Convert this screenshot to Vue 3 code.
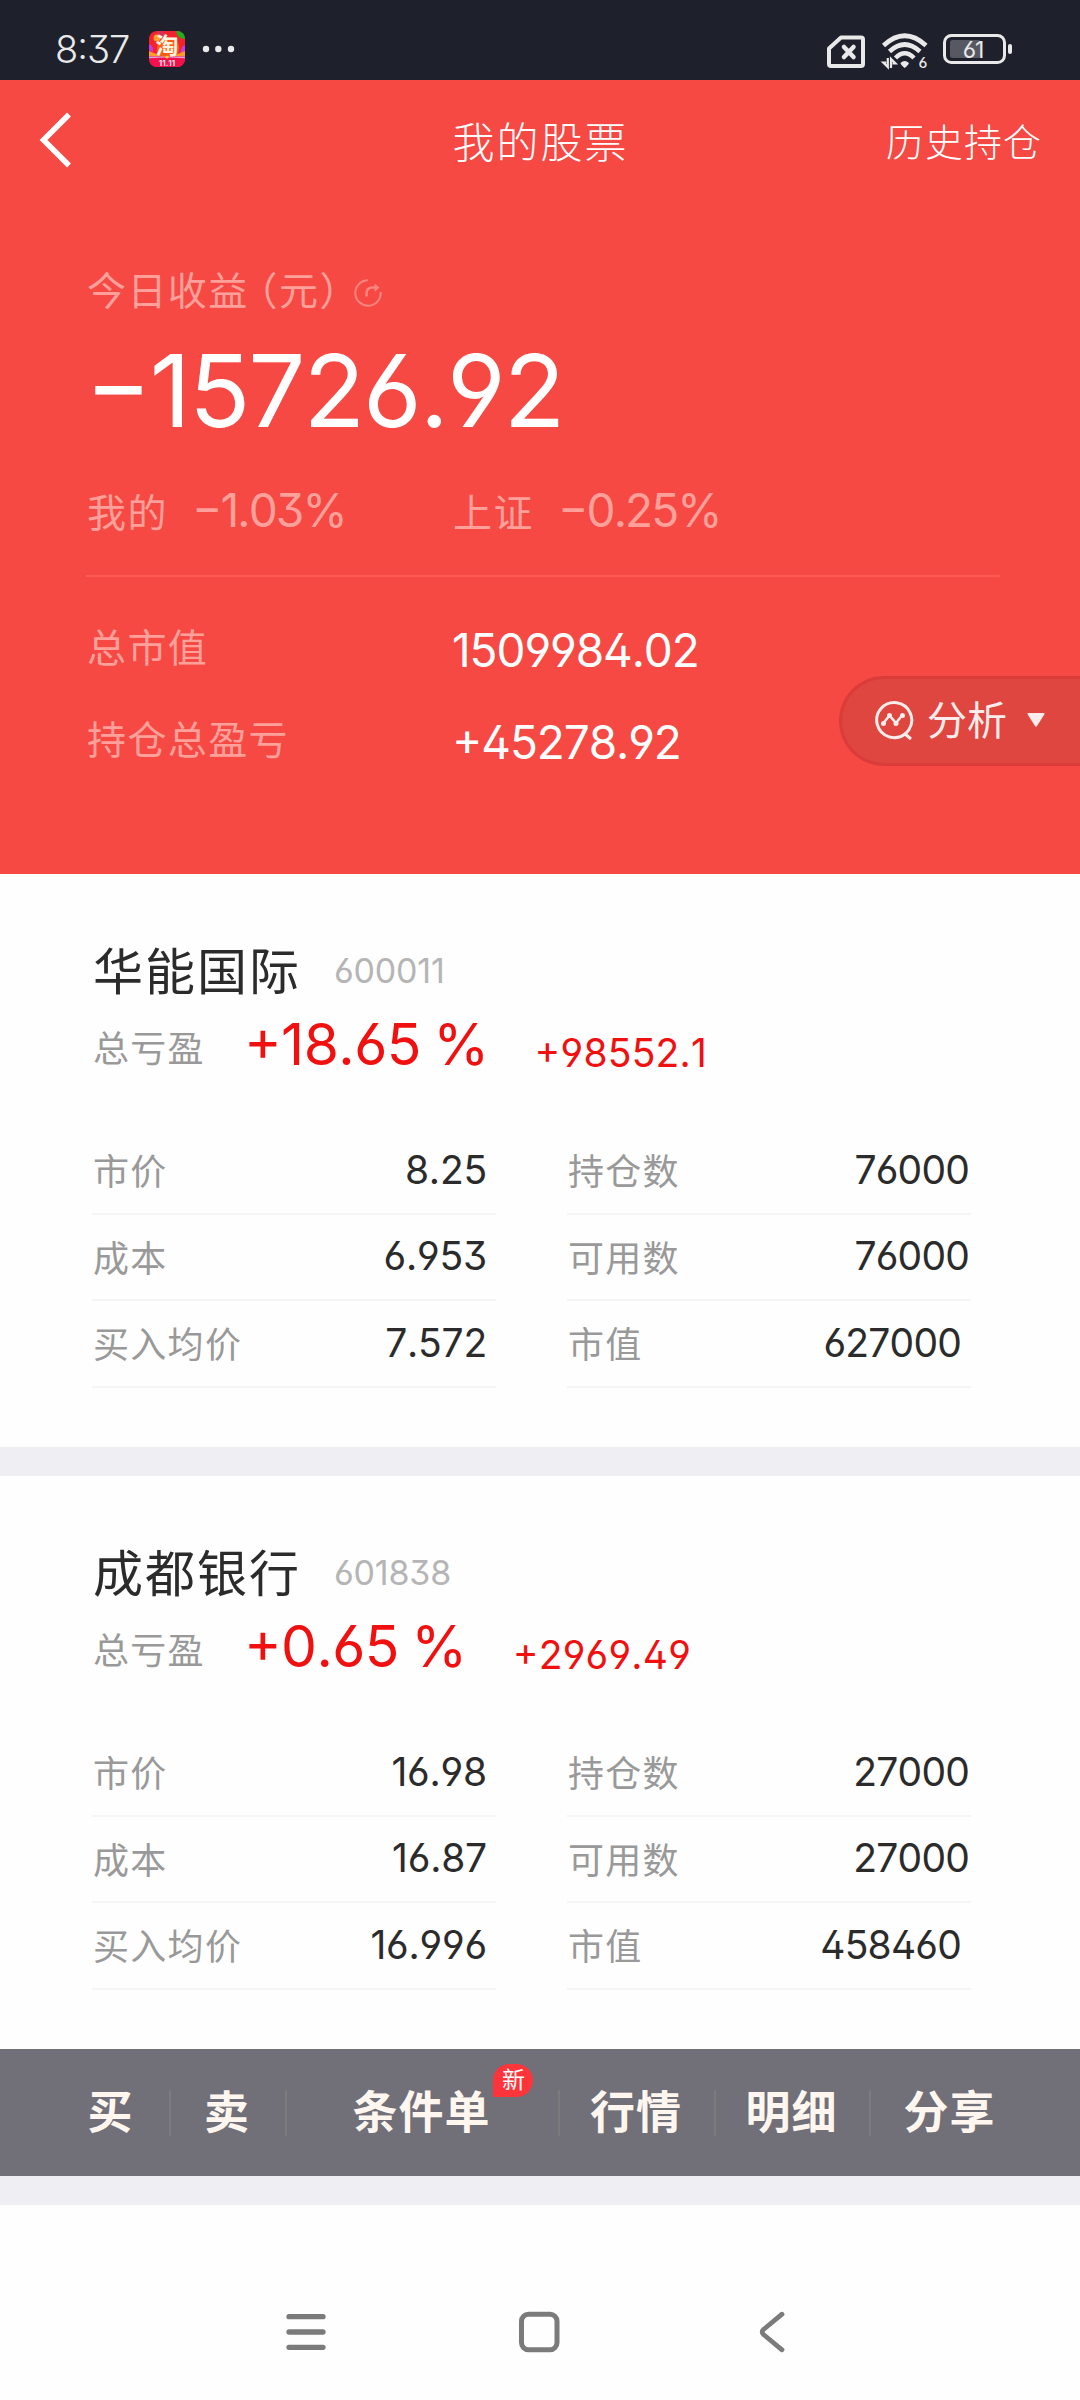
<template>
  <div class="stock-page">
    <div class="status-bar">
      <span class="time">8:37</span>
      <svg class="app-icon" width="36" height="36" viewBox="0 0 36 36">
        <defs>
          <clipPath id="appClip"><rect width="36" height="36" rx="8" /></clipPath>
        </defs>
        <g clip-path="url(#appClip)">
          <rect width="36" height="36" fill="#f5222d" />
          <path d="M8 0h8l-2 8-8 2z" fill="#d9304f" />
          <circle cx="19" cy="17" r="11" fill="#ff5a14" />
          <path d="M0 13q5 2 4 8l-4-2zM36 14q-5 2-4 9l4-3z" fill="#c83be0" />
          <path d="M27 0h9v8q-7 0-9-8z" fill="#19b51c" />
          <circle cx="8" cy="7" r="3.5" fill="#ffa12b" />
          <path d="M0 20l12 5H0zM36 20l-12 5h12z" fill="#ff9a2a" />
          <path d="M0 25.5h36v2H0z" fill="#d9a3e6" />
          <path d="M0 27.5q18-2 36 0V36H0z" fill="#f2114c" />
          <circle cx="18" cy="26" r="1.5" fill="#ffd21f" />
        </g>
        <text x="18" y="23" text-anchor="middle" class="app-char">淘</text>
        <text x="18" y="34.500" text-anchor="middle" class="app-date">11.11</text>
      </svg>
      <svg class="dots" width="34" height="8" viewBox="0 0 34 8">
        <circle cx="4" cy="4" r="3.2" />
        <circle cx="16.3" cy="4" r="3.2" />
        <circle cx="29" cy="4" r="3.2" />
      </svg>

      <svg class="status-icons" width="190" height="50" viewBox="0 -6 190 50">
        <!-- no sim -->
        <path d="M16 7.500H36q2 0 2 2V34q0 2-2 2H6q-2 0-2-2V18.500z" fill="none" stroke="#e9e9e9" stroke-width="4" stroke-linejoin="round" />
        <path d="M19 17l9.500 10M28.500 17L19 27" stroke="#e9e9e9" stroke-width="4.500" stroke-linecap="round" />
        <!-- wifi -->
        <g fill="none" stroke="#e9e9e9" stroke-width="4.600">
          <path d="M58.500 15.500Q79.700-4 101 15.500" />
          <path d="M64.500 21.500Q79.700 7.500 95 21.500" />
          <path d="M70.500 28Q79.700 18.500 89 28" />
        </g>
        <path d="M75.500 33q4.200-4 8.400 0q0 1.500-4.200 5q-4.200-3.500-4.200-5z" fill="#e9e9e9" />
        <path d="M62.800 28v9l-4.500-4.500h3M66 38v-9l4.500 4.500h-3" fill="none" stroke="#e9e9e9" stroke-width="2.200" />
        <text x="93.500" y="38" class="wifi-num">6</text>
        <!-- battery -->
        <rect x="119.500" y="5.500" width="60" height="27" rx="7" fill="none" stroke="#e9e9e9" stroke-width="3" />
        <rect x="125" y="10" width="30.500" height="18" rx="2.500" fill="#565862" />
        <rect x="183" y="14" width="4" height="10" rx="2" fill="#e9e9e9" />
        <text x="148" y="27.500" text-anchor="middle" class="battery-num">61</text>
      </svg>
    </div>

    <div class="header">
      <div class="nav">
        <svg class="back" width="40" height="60" viewBox="0 0 40 60">
          <path d="M33 4.500L7.500 30L33 55.500" fill="none" stroke="#fff" stroke-width="5.500" />
        </svg>
        <span class="title">我的股票</span>
        <span class="history">历史持仓</span>
      </div>

      <div class="summary">
        <div class="today">
          <span>今日收益</span><span class="unit">（元）</span>
          <svg width="30" height="30" viewBox="0 0 30 30">
            <g fill="none" stroke="#fd8580" stroke-width="2">
              <path d="M15 2.300A12.700 12.700 0 1 0 27.700 14" />
              <path d="M13.500 18.500v-3q0-6 6-6h5" stroke-width="2.500" />
            </g>
            <path d="M21.500 5.500l5 4l-5 4.500z" fill="#fd8580" />
          </svg>
        </div>
        <div class="profit">−15726.92</div>
        <div class="rates">
          <div v-for="rate in rates" :key="rate.name" class="rate">
            <span class="rate-name">{{ rate.name }}</span>
            <span class="rate-value">{{ rate.value }}</span>
          </div>
        </div>
        <div v-for="item in totals" :key="item.label" class="total">
          <span class="total-label">{{ item.label }}</span>
          <span class="total-value">{{ item.value }}</span>
        </div>
      </div>

      <div class="analysis">
        <svg width="40" height="42" viewBox="0 0 40 42">
          <g fill="none" stroke="#fdeceb" stroke-width="3">
            <path d="M31.500 34.500A17.500 17.500 0 1 1 35 30.500Q33.500 33 31 35L37 40" />
            <path d="M9.500 24l6-7.500l6.500 7.500l6-7.500" stroke-width="2.500" />
          </g>
          <g fill="#fdeceb">
            <circle cx="9.500" cy="24.500" r="2.500" />
            <circle cx="15.500" cy="16.500" r="2.500" />
            <circle cx="22" cy="24.500" r="2.500" />
            <circle cx="28.500" cy="16.500" r="2.500" />
          </g>
        </svg>
        <span class="analysis-text">分析</span>
        <svg width="18" height="14" viewBox="0 0 18 14">
          <path d="M1.500 0h15q1.500 0 .8 1.500L10 13q-1 1.500-2 0L.7 1.500Q0 0 1.500 0z" fill="#fdeceb" />
        </svg>
      </div>
    </div>

    <div v-for="stock in stocks" :key="stock.code" class="stock">
      <div class="stock-head">
        <span class="stock-name">{{ stock.name }}</span>
        <span class="stock-code">{{ stock.code }}</span>
      </div>
      <div class="stock-profit">
        <span class="label">总亏盈</span>
        <span class="percent">{{ stock.percent }}</span>
        <span class="amount">{{ stock.amount }}</span>
      </div>
      <div class="stock-grid">
        <div v-for="cell in stock.cells" :key="cell.label" class="cell">
          <span class="label">{{ cell.label }}</span>
          <span class="value" :class="{ inset: cell.label === '市值' }">{{ cell.value }}</span>
        </div>
      </div>
    </div>

    <div class="actions">
      <div v-for="action in actions" :key="action.name" class="action" :style="{ width: action.width + 'px' }">
        <span class="action-name">{{ action.name }}<i v-if="action.badge" class="badge">{{ action.badge }}</i></span>
      </div>
    </div>
    <div class="divider"></div>

    <div class="system-nav">
      <svg width="40" height="44" viewBox="0 0 40 44">
        <path d="M3 6.700h34M3 22h34M3 37.300h34" stroke-width="5.300" />
      </svg>
      <svg width="44" height="44" viewBox="0 0 44 44">
        <rect x="4.500" y="4.200" width="35.500" height="35.500" rx="7" stroke-width="5" />
      </svg>
      <svg width="30" height="44" viewBox="0 0 30 44">
        <path d="M25 4.200L6.500 19.500q-2.600 2.500 0 5L25 39.800" stroke-width="4.800" />
      </svg>
    </div>
  </div>
</template>

<script setup>
import { ref } from 'vue'

const rates = ref([
  { name: '我的', value: '−1.03%' },
  { name: '上证', value: '−0.25%' }
])

const totals = ref([
  { label: '总市值', value: '1509984.02' },
  { label: '持仓总盈亏', value: '+45278.92' }
])

const stocks = ref([
  {
    name: '华能国际',
    code: '600011',
    percent: '+18.65 %',
    amount: '+98552.1',
    cells: [
      { label: '市价', value: '8.25' },
      { label: '持仓数', value: '76000' },
      { label: '成本', value: '6.953' },
      { label: '可用数', value: '76000' },
      { label: '买入均价', value: '7.572' },
      { label: '市值', value: '627000' }
    ]
  },
  {
    name: '成都银行',
    code: '601838',
    percent: '+0.65 %',
    amount: '+2969.49',
    cells: [
      { label: '市价', value: '16.98' },
      { label: '持仓数', value: '27000' },
      { label: '成本', value: '16.87' },
      { label: '可用数', value: '27000' },
      { label: '买入均价', value: '16.996' },
      { label: '市值', value: '458460' }
    ]
  }
])

const actions = ref([
  { name: '买', width: 122 },
  { name: '卖', width: 116 },
  { name: '条件单', width: 273, badge: '新' },
  { name: '行情', width: 156 },
  { name: '明细', width: 155 },
  { name: '分享', width: 159 }
])
</script>

<style>
body {
  background: #fefefe;
}
</style>

<style scoped>
.stock-page {
  width: 1080px;
  height: 2400px;
  overflow: hidden;
  background: #fefefe;
  font-family: Inter, "Noto Sans CJK SC", sans-serif;
  font-feature-settings: "ss01", "case";
  font-kerning: none;
  white-space: nowrap;
}

.status-bar {
  display: flex;
  align-items: center;
  height: 80px;
  padding: 18px 65px 0 55px;
  box-sizing: border-box;
  background: #1e212b;
}

.time {
  width: 94px;
  font-size: 38px;
  font-weight: 350;
  line-height: 60px;
  letter-spacing: -1px;
  color: #e9e9e9;
}

.app-char {
  font-size: 23px;
  font-weight: 700;
  fill: #fff5e0;
}

.app-date {
  font-size: 8px;
  font-weight: 700;
  fill: #ffe3ee;
}

.dots {
  margin-left: 17px;
  fill: #e9e9e9;
}

.status-icons {
  margin-left: auto;
}

.wifi-num {
  font-size: 15px;
  font-weight: 500;
  fill: #e9e9e9;
}

.battery-num {
  font-size: 23px;
  letter-spacing: -1px;
  fill: #e9e9e9;
}

.header {
  position: relative;
  height: 794px;
  background: #f64943;
  color: #fff;
}

.nav {
  display: grid;
  grid-template-columns: 1fr auto 1fr;
  align-items: center;
  height: 120px;
  padding: 0 38px 0 36px;
}

.title {
  padding: 0 0 2px 3px;
  font-size: 42px;
  font-weight: 300;
  letter-spacing: 2px;
}

.history {
  justify-self: end;
  padding-bottom: 2px;
  font-size: 38px;
  font-weight: 300;
  letter-spacing: 1px;
}

.summary {
  padding: 61px 80px 0 86px;
  line-height: 60px;
}

.today {
  display: flex;
  align-items: center;
  padding-left: 1px;
  font-size: 39px;
  letter-spacing: 1.4px;
  color: #ffa09b;
}

.unit {
  margin-left: -10px;
}

.today svg {
  margin: 4px 0 0 -7px;
}

.profit {
  margin: 9px 0 0 -1px;
  font-size: 101px;
  line-height: 120px;
  letter-spacing: -2px;
}

.rates {
  display: flex;
  margin-top: 32px;
  padding-bottom: 33px;
  border-bottom: 2px solid #fb5b54;
  margin-bottom: 42px;
  color: #ffa09b;
}

.rate {
  display: flex;
  width: 366px;
}

.rate-name {
  width: 105px;
  padding: 1px 0 0 1px;
  line-height: 60px;
  height: 59px;
  font-size: 39px;
  letter-spacing: 1.4px;
}

.rate-value {
  height: 60px;
  font-size: 46px;
  line-height: 57px;
  letter-spacing: -1.9px;
}

.total {
  display: flex;
  height: 60px;
  margin-bottom: 32px;
}

.total-label {
  width: 365px;
  padding-left: 1px;
  font-size: 39px;
  line-height: 57px;
  letter-spacing: 1.4px;
  color: #ffa09b;
}

.total-value {
  font-size: 46px;
  line-height: 63px;
  letter-spacing: -1.1px;
}

.analysis {
  position: absolute;
  top: 596px;
  right: 0;
  display: flex;
  align-items: center;
  width: 241px;
  height: 90px;
  padding: 0 0 2px 32px;
  box-sizing: border-box;
  border: 3px solid #da3c3a;
  border-right: none;
  border-radius: 45px 0 0 45px;
  background: #de463f;
}

.analysis-text {
  width: 100px;
  margin-left: 13px;
  padding-bottom: 5px;
  font-size: 40px;
  color: #fdeceb;
}

.stock {
  height: 573px;
  padding: 60px 109px 0 92px;
  box-sizing: border-box;
}

.stock + .stock {
  height: 602px;
  border-top: 29px solid #efeef3;
}

.stock-head {
  display: flex;
  align-items: center;
  height: 72px;
  padding-left: 1px;
}

.stock-name {
  width: 241px;
  padding-bottom: 5px;
  font-size: 50px;
  letter-spacing: 2px;
  color: #2b2b2b;
}

.stock-code {
  font-size: 34px;
  letter-spacing: -0.2px;
  color: #b5b5b5;
}

.stock-profit {
  display: flex;
  height: 80px;
  padding-left: 1px;
  line-height: 78px;
  color: #f0100f;
}

.label {
  font-size: 36px;
  letter-spacing: 1.3px;
  color: #999;
}

.stock-profit .label {
  width: 151px;
  line-height: 86px;
}

.percent {
  font-size: 57px;
  letter-spacing: -0.6px;
  word-spacing: -3px;
}

.amount {
  margin-left: 46px;
  font-size: 39px;
  line-height: 93px;
  letter-spacing: 0.2px;
}

.stock-grid {
  display: grid;
  grid-template-columns: 404px 404px;
  grid-template-rows: 87px 86px 87px;
  column-gap: 71px;
  margin-top: 42px;
}

.cell {
  display: flex;
  align-items: center;
  justify-content: space-between;
  padding: 0 2px 3px 1px;
  border-bottom: 2px solid #f5f5f5;
}

.cell:nth-child(odd) {
  padding-right: 9px;
}

.value {
  font-size: 39px;
  letter-spacing: -0.8px;
  color: #2b2b2b;
}

.cell:nth-child(odd) .value {
  letter-spacing: -0.2px;
}

.inset {
  padding-right: 8px;
}

.actions {
  display: flex;
  align-items: center;
  height: 127px;
  padding-left: 49px;
  background: #716f78;
}

.action {
  height: 46px;
  box-sizing: border-box;
  border-right: 2px solid #7d7a7c;
  font-size: 45px;
  font-weight: 600;
  line-height: 46px;
  letter-spacing: 1px;
  text-align: center;
  color: #fff7ef;
}

.action:first-child {
  padding-left: 3px;
}

.action:nth-child(n + 2) {
  padding-right: 2px;
}

.action:last-child {
  border-right: none;
}

.action-name {
  position: relative;
}

.badge {
  position: absolute;
  left: 141px;
  top: -21px;
  width: 40px;
  height: 33px;
  border-radius: 17px 17px 17px 0;
  background: #fd3439;
  font-size: 23px;
  font-style: normal;
  font-weight: 400;
  line-height: 33px;
  letter-spacing: 0;
  color: #fff;
}

.divider {
  height: 29px;
  background: #efeef3;
}

.system-nav {
  display: grid;
  grid-template-columns: 231px 240px 30px;
  padding: 105px 0 0 286px;
}

.system-nav svg {
  fill: none;
  stroke: #7b7b7b;
  stroke-linecap: round;
}
</style>
